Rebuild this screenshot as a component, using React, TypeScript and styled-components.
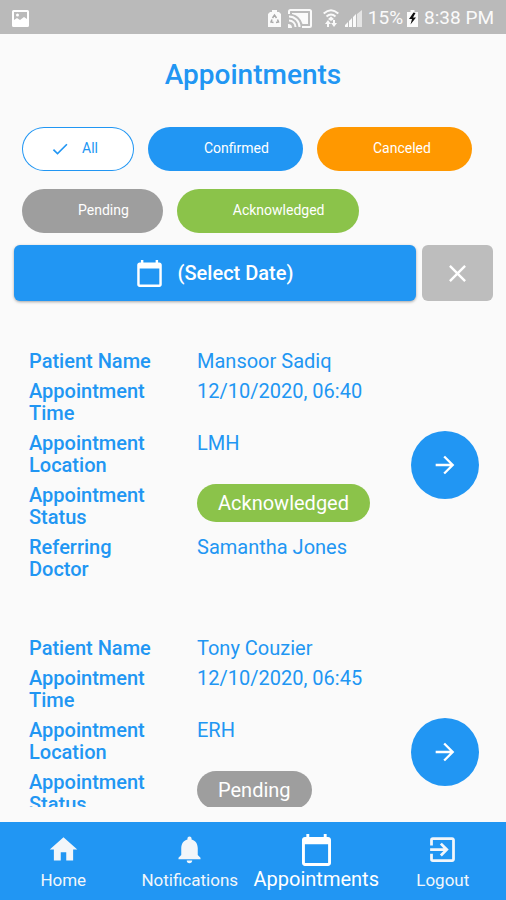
import React from "react";
import styled, { createGlobalStyle } from "styled-components";
import {
  MdArrowForward,
  MdCheck,
  MdClose,
  MdExitToApp,
  MdHome,
  MdNotifications,
} from "react-icons/md";

const BLUE = "#2196f3";
const GREEN = "#8bc34a";
const GREY = "#9e9e9e";
const ORANGE = "#ff9800";

const GlobalStyle = createGlobalStyle`
  *, *::before, *::after { box-sizing: border-box; }
  body { margin: 0; background: #fafafa; font-family: Roboto, "Liberation Sans", sans-serif; }
  button { font: inherit; border: 0; margin: 0; padding: 0; cursor: pointer; }
`;

const Screen = styled.div`
  display: flex;
  flex-direction: column;
  height: 100vh;
  overflow: hidden;
  background: #fafafa;
`;

const StatusBar = styled.header`
  flex: none;
  display: flex;
  align-items: center;
  justify-content: space-between;
  height: 34px;
  padding: 2px 12px 0;
  background: #bababa;
  color: #fafafa;
  font-size: 19px;
  line-height: 24px;
`;

const StatusGroup = styled.div`
  display: flex;
  align-items: center;
`;

const StatusIcon = styled.svg<{ $gap?: number }>`
  display: block;
  flex: none;
  margin-right: ${(p) => p.$gap ?? 0}px;
`;

const BatteryLevel = styled.span`
  margin-right: 4px;
`;

const Title = styled.h1`
  flex: none;
  margin: 0;
  padding: 24px 16px 35px;
  color: ${BLUE};
  font-size: 28px;
  font-weight: 500;
  line-height: 34px;
  text-align: center;
`;

const Filters = styled.div`
  flex: none;
  display: flex;
  flex-wrap: wrap;
  gap: 18px 14px;
  padding: 0 22px;
`;

const Chip = styled.button<{ $color: string; $selected?: boolean; $wide?: boolean }>`
  display: flex;
  align-items: center;
  min-width: ${(p) => (p.$wide ? 155 : 112)}px;
  height: 44px;
  padding: 0 34px 2px 0;
  border-radius: 22px;
  background: ${(p) => (p.$selected ? "#fff" : p.$color)};
  box-shadow: ${(p) => (p.$selected ? `inset 0 0 0 1px ${p.$color}` : "none")};
  color: ${(p) => (p.$selected ? p.$color : "#fff")};
  font-size: 14px;
  line-height: 20px;
`;

const ChipMark = styled.span<{ $selected?: boolean }>`
  display: flex;
  width: ${(p) => (p.$selected ? 60 : 56)}px;
  padding: 2px 0 0 28px;
  font-size: 20px;
`;

const DateBar = styled.div`
  flex: none;
  display: flex;
  gap: 6px;
  padding: 12px 13px 0 14px;
`;

const DateButton = styled.button`
  flex: 1;
  display: flex;
  align-items: center;
  justify-content: center;
  gap: 16px;
  height: 56px;
  border-radius: 6px;
  background: ${BLUE};
  box-shadow: 0 1px 3px rgba(0, 0, 0, 0.35);
  color: #fff;
  font-size: 20px;
  font-weight: 500;
`;

const ClearButton = styled.button`
  display: flex;
  align-items: center;
  justify-content: center;
  width: 71px;
  height: 56px;
  border-radius: 6px;
  background: #bdbdbd;
  color: #fff;
`;

const List = styled.main`
  flex: 1;
  min-height: 0;
  margin: 49px 0 15px;
  overflow-y: auto;
  scrollbar-width: none;
`;

const Card = styled.article`
  display: flex;
  align-items: center;
  justify-content: space-between;
  margin-bottom: 57px;
  padding: 0 27px 0 29px;
`;

const Details = styled.dl`
  flex: 1;
  display: flex;
  flex-direction: column;
  gap: 8px;
  margin: 0;
  color: ${BLUE};
  font-size: 20px;
  line-height: 22px;
`;

const Detail = styled.div`
  display: grid;
  grid-template-columns: 128px 1fr;
  column-gap: 40px;
`;

const Label = styled.dt`
  font-weight: 500;
`;

const Value = styled.dd`
  display: flex;
  align-items: center;
  margin: 0;
  height: 22px;
`;

const StatusValue = styled(Value)`
  height: 38px;
`;

const Badge = styled.span<{ $color: string }>`
  padding: 7px 21px;
  border-radius: 20px;
  background: ${(p) => p.$color};
  color: #fff;
  line-height: 24px;
`;

const OpenButton = styled.button`
  flex: none;
  display: flex;
  align-items: center;
  justify-content: center;
  width: 68px;
  height: 68px;
  border-radius: 50%;
  background: ${BLUE};
  color: #fff;
`;

const Nav = styled.nav`
  flex: none;
  display: grid;
  grid-template-columns: repeat(4, 1fr);
  height: 78px;
  background: ${BLUE};
`;

const NavItem = styled.button<{ $active?: boolean }>`
  display: flex;
  flex-direction: column;
  align-items: center;
  justify-content: flex-end;
  gap: ${(p) => (p.$active ? 1 : 2)}px;
  padding-bottom: ${(p) => (p.$active ? 9 : 8)}px;
  background: transparent;
  color: ${(p) => (p.$active ? "#fff" : "#f2f6fa")};
  font-size: ${(p) => (p.$active ? 20 : 17)}px;
  line-height: 24px;
`;

function CalendarIcon({ width, height }: { width: number; height: number }) {
  return (
    <svg width={width} height={height} viewBox="0 0 20 22" aria-hidden="true">
      <path
        fill="currentColor"
        d="M18 2h-1V0h-2v2H5V0H3v2H2C.9 2 0 2.900 0 4v16c0 1.100.9 2 2 2h16c1.100 0 2-.9 2-2V4c0-1.100-.9-2-2-2zm0 18H2V7h16z"
      />
    </svg>
  );
}

const filters = [
  { name: "All", color: BLUE, selected: true },
  { name: "Confirmed", color: BLUE, wide: true },
  { name: "Canceled", color: ORANGE, wide: true },
  { name: "Pending", color: GREY },
  { name: "Acknowledged", color: GREEN },
];

const appointments = [
  { name: "Mansoor Sadiq", time: "12/10/2020, 06:40", location: "LMH", status: "Acknowledged", color: GREEN, doctor: "Samantha Jones" },
  { name: "Tony Couzier", time: "12/10/2020, 06:45", location: "ERH", status: "Pending", color: GREY, doctor: "Samantha Jones" },
];

const tabs = [
  { name: "Home", icon: <MdHome size={33} /> },
  { name: "Notifications", icon: <MdNotifications size={33} /> },
  { name: "Appointments", icon: <CalendarIcon width={29} height={32} />, active: true },
  { name: "Logout", icon: <MdExitToApp size={33} /> },
];

export default function App() {
  return (
    <Screen>
      <GlobalStyle />
      <StatusBar>
        <StatusIcon width="17" height="17" viewBox="0 0 17 17" aria-label="Picture saved">
          <path fill="#fff" fillRule="evenodd" d="M1.500 0h14A1.500 1.500 0 0 1 17 1.500v14a1.500 1.500 0 0 1-1.500 1.500h-14A1.500 1.500 0 0 1 0 15.500v-14A1.500 1.500 0 0 1 1.500 0ZM2 2v8l3-2 3 2 4-3 3 2V2Z" />
          <circle cx="5.500" cy="5" r="1.500" fill="#fff" />
        </StatusIcon>
        <StatusGroup>
          <StatusIcon $gap={7} width="13" height="17" viewBox="0 0 13 17" aria-label="Battery saver">
            <path fill="currentColor" d="M4 0h5v2h2l2 2v13H0V4l2-2h2Z" />
            <path fill="none" stroke="#a9a9a9" strokeWidth="1.500" d="m4.500 8 2-3 2 3M9.500 9.500 10.500 12 8 12.500M5.500 12.500 3 12l1-2.500" />
          </StatusIcon>
          <StatusIcon $gap={11} width="24" height="19" viewBox="0 0 24 19" aria-label="Casting">
            <path fill="none" stroke="currentColor" strokeWidth="2" d="M1 5V2.500Q1 1 2.500 1h19Q23 1 23 2.500v14q0 1.500-1.500 1.500H14M1 7.500A10.500 10.500 0 0 1 11.500 18M1 11.500A6.500 6.500 0 0 1 7.500 18" />
            <path fill="currentColor" d="M4 4h16v11h-5.500A14 14 0 0 0 4 5ZM0 15a4 4 0 0 1 4 4H0Z" />
          </StatusIcon>
          <StatusIcon $gap={6} width="16" height="18" viewBox="0 0 16 18" aria-label="Wi-Fi">
            <path fill="none" stroke="currentColor" strokeWidth="2" d="M.7 4.500Q8-2 15.300 4.500M3.500 7.500Q8 3.500 12.500 7.500" />
            <path fill="currentColor" d="m8 7.500 3 2.500-3 2-3-2ZM5 11l3 4H6v3H4v-3H2ZM11 18l-3-4h2v-3h2v3h2Z" />
          </StatusIcon>
          <StatusIcon $gap={6} width="17" height="17" viewBox="0 0 17 17" aria-label="Signal">
            <path fill="currentColor" d="M0 17v-2l3-3v5ZM4 17v-6l3-3v9ZM8 17V7l3-3v13Z" />
            <path fill="currentColor" fillOpacity=".65" d="M12 17V4l5-4v17Z" />
          </StatusIcon>
          <BatteryLevel>15%</BatteryLevel>
          <StatusIcon $gap={6} width="11" height="17" viewBox="0 0 11 17" aria-label="Charging">
            <path fill="currentColor" d="M3.500 0h4v2H11v15H0V2h3.500Z" />
            <path fill="#111" d="M6.500 2.500 2 9h3l-1.500 5.500L9 7.500H6L8.500 3Z" />
          </StatusIcon>
          <span>8:38 PM</span>
        </StatusGroup>
      </StatusBar>

      <Title>Appointments</Title>

      <Filters>
        {filters.map((f) => (
          <Chip
            key={f.name}
            type="button"
            $color={f.color}
            $selected={f.selected}
            $wide={f.wide}
            aria-pressed={!!f.selected}
          >
            <ChipMark $selected={f.selected}>{f.selected && <MdCheck />}</ChipMark>
            {f.name}
          </Chip>
        ))}
      </Filters>

      <DateBar>
        <DateButton type="button">
          <CalendarIcon width={25} height={27} />
          (Select Date)
        </DateButton>
        <ClearButton type="button" aria-label="Clear date">
          <MdClose size={29} />
        </ClearButton>
      </DateBar>

      <List>
        {appointments.map((a) => (
          <Card key={a.name}>
            <Details>
              <Detail><Label>Patient Name</Label><Value>{a.name}</Value></Detail>
              <Detail><Label>Appointment Time</Label><Value>{a.time}</Value></Detail>
              <Detail><Label>Appointment Location</Label><Value>{a.location}</Value></Detail>
              <Detail>
                <Label>Appointment Status</Label>
                <StatusValue><Badge $color={a.color}>{a.status}</Badge></StatusValue>
              </Detail>
              <Detail><Label>Referring Doctor</Label><Value>{a.doctor}</Value></Detail>
            </Details>
            <OpenButton type="button" aria-label={`Open appointment for ${a.name}`}>
              <MdArrowForward size={28} />
            </OpenButton>
          </Card>
        ))}
      </List>

      <Nav>
        {tabs.map((t) => (
          <NavItem key={t.name} type="button" $active={t.active} aria-current={t.active ? "page" : undefined}>
            {t.icon}
            {t.name}
          </NavItem>
        ))}
      </Nav>
    </Screen>
  );
}
